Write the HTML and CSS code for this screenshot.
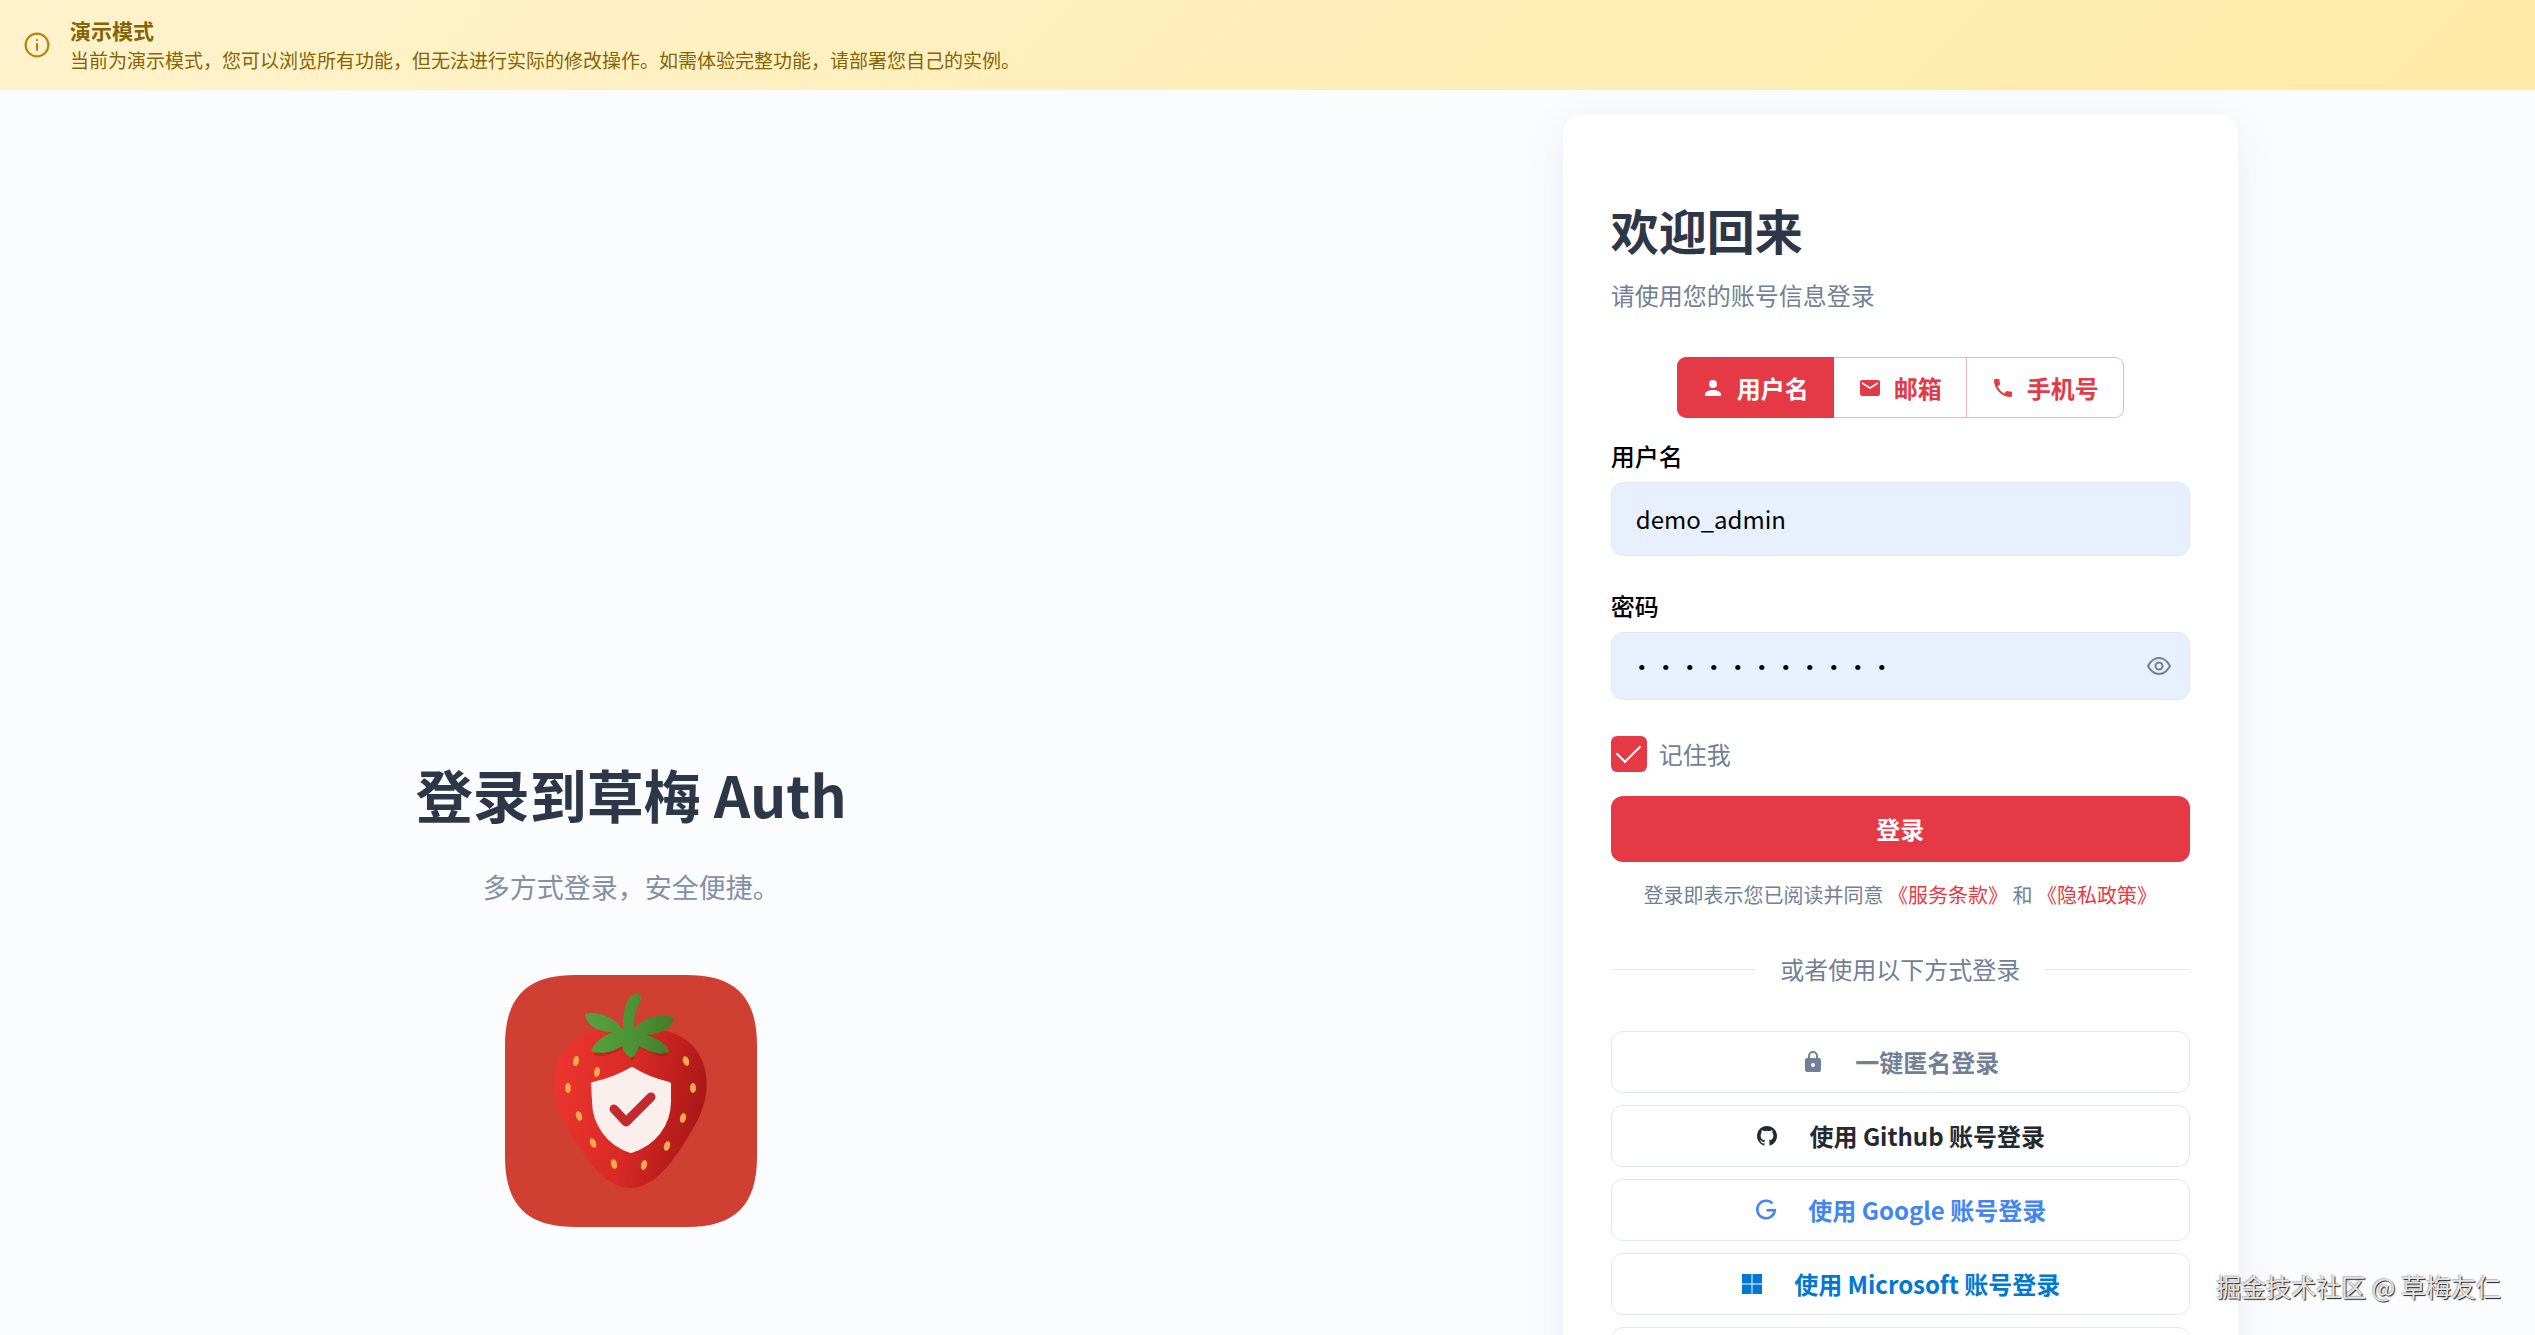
FILE: index.html
```html
<!DOCTYPE html>
<html lang="zh-CN">
<head>
<meta charset="utf-8">
<meta name="viewport" content="width=device-width, initial-scale=1">
<title>登录到草梅 Auth</title>
<link rel="stylesheet" href="styles.css">
</head>
<body>
<header class="banner">
  <svg class="banner-icon" viewBox="0 0 24 24" fill="none" stroke="currentColor" stroke-width="2" stroke-linecap="round"><circle cx="12" cy="12" r="10.500"/><path d="M12 11v5.500M12 7.500v.1"/></svg>
  <div>
    <strong class="banner-title">演示模式</strong>
    <p class="banner-text">当前为演示模式，您可以浏览所有功能，但无法进行实际的修改操作。如需体验完整功能，请部署您自己的实例。</p>
  </div>
</header>

<main class="page">
  <section class="hero">
    <h1 class="hero-title">登录到草梅 Auth</h1>
    <p class="hero-text">多方式登录，安全便捷。</p>
    <svg class="logo" viewBox="0 0 252 252" role="img" aria-label="草梅 Auth">
      <defs>
        <linearGradient id="berry" x1="0" y1="0.300" x2="1" y2="0.500">
          <stop offset="0" stop-color="#ec3530"/><stop offset="0.500" stop-color="#d92a26"/><stop offset="1" stop-color="#a81716"/>
        </linearGradient>
        <linearGradient id="leaf" x1="0" y1="0" x2="1" y2="0">
          <stop offset="0" stop-color="#57a33c"/><stop offset="0.600" stop-color="#4a9135"/><stop offset="1" stop-color="#467a28"/>
        </linearGradient>
      </defs>
      <path fill="#cf4032" d="M70 0H182C230 0 252 22 252 70V182C252 230 230 252 182 252H70C22 252 0 230 0 182V70C0 22 22 0 70 0Z"/>
      <path fill="url(#berry)" d="M126 58C150 50 178 56 192 76C208 100 202 130 190 150C175 176 154 213 125 213C97 213 76 176 61 150C49 130 43 100 58 76C72 55 100 50 126 58Z"/>
      <path fill="#8e1a17" opacity=".4" d="M88 80C101 83 112 78 119 72L127 86L135 72C143 78 155 83 164 80L152 68H98Z"/>
      <path fill="url(#leaf)" d="M118 55C118 43 119 28 126 21C130 17 138 19 136 25C130 34 129 43 129 54C138 43 153 38 168 42C170 52 155 60 140 60C151 62 163 69 164 77C153 81 143 76 134 71C133 76 130 81 126 83C121 80 118 76 117 71C108 77 97 80 86 76C89 68 98 60 109 57C93 58 81 49 80 39C95 36 110 43 118 55Z"/>
      <g fill="#f5a94b">
        <ellipse cx="71" cy="86" rx="3" ry="5" transform="rotate(12 71 86)"/><ellipse cx="92" cy="97" rx="3" ry="5" transform="rotate(10 92 97)"/><ellipse cx="63" cy="113" rx="3" ry="5"/><ellipse cx="74" cy="141" rx="3" ry="5" transform="rotate(-18 74 141)"/><ellipse cx="88" cy="168" rx="3" ry="5" transform="rotate(-22 88 168)"/><ellipse cx="109" cy="189" rx="3" ry="5" transform="rotate(-16 109 189)"/><ellipse cx="139" cy="190" rx="3" ry="5" transform="rotate(16 139 190)"/><ellipse cx="162" cy="171" rx="3" ry="5" transform="rotate(18 162 171)"/><ellipse cx="178" cy="143" rx="3" ry="5" transform="rotate(14 178 143)"/><ellipse cx="188" cy="113" rx="3" ry="5"/><ellipse cx="181" cy="86" rx="3" ry="5" transform="rotate(-18 181 86)"/>
      </g>
      <path fill="#faefed" stroke="#faefed" stroke-width="4" stroke-linejoin="round" d="M127 94C138 101 151 106 164 109V126C164 150 149 169 126 176C103 169 89 148 89 126L88 109C102 106 115 101 127 94Z"/>
      <path fill="none" stroke="#c4292d" stroke-width="9" stroke-linecap="round" stroke-linejoin="round" d="M109 134L121 147L146 122"/>
    </svg>
  </section>

  <section class="side">
    <div class="card">
      <h2 class="card-title">欢迎回来</h2>
      <p class="card-text">请使用您的账号信息登录</p>

      <div class="tabs">
        <button class="tab tab-active" type="button">
          <svg class="icon" viewBox="0 0 24 24" fill="currentColor"><path d="M12 12a4 4 0 1 0 0-8 4 4 0 0 0 0 8zm0 2c-2.670 0-8 1.340-8 4v2h16v-2c0-2.660-5.330-4-8-4z"/></svg>用户名</button>
        <button class="tab" type="button">
          <svg class="icon" viewBox="0 0 24 24" fill="currentColor"><path d="M20 4H4a2 2 0 0 0-2 2v12c0 1.100.9 2 2 2h16a2 2 0 0 0 2-2V6a2 2 0 0 0-2-2zm0 4-8 5-8-5V6l8 5 8-5v2z"/></svg>邮箱</button>
        <button class="tab" type="button">
          <svg class="icon" viewBox="0 0 24 24" fill="currentColor"><path d="M6.620 10.790a15.050 15.050 0 0 0 6.590 6.590l2.200-2.200a1 1 0 0 1 1.020-.24c1.120.37 2.330.57 3.570.57.550 0 1 .45 1 1V20a1 1 0 0 1-1 1C10.610 21 3 13.390 3 4a1 1 0 0 1 1-1h3.500c.55 0 1 .45 1 1 0 1.250.2 2.450.57 3.570.11.350.03.740-.25 1.020l-2.200 2.200z"/></svg>手机号</button>
      </div>

      <form class="form">
        <label class="label" for="username">用户名</label>
        <input class="input input-user" id="username" type="text" value="demo_admin">
        <label class="label" for="password">密码</label>
        <div class="password">
          <input class="input input-pass" id="password" type="password" value="demo1234567">
          <button class="eye" type="button" aria-label="显示密码">
            <svg class="icon" viewBox="0 0 24 24" fill="none" stroke="currentColor" stroke-width="2"><path d="M1 12C4 6.500 7.500 4 12 4s8 2.500 11 8c-3 5.500-6.500 8-11 8s-8-2.500-11-8z"/><circle cx="12" cy="12" r="3.500"/></svg>
          </button>
        </div>
        <div class="remember">
          <input class="check" id="remember" type="checkbox" checked>
          <label for="remember">记住我</label>
        </div>
        <button class="submit" type="button">登录</button>
      </form>

      <p class="terms">登录即表示您已阅读并同意 <a href="#terms">《服务条款》</a> 和 <a href="#privacy">《隐私政策》</a></p>
      <div class="divider">或者使用以下方式登录</div>

      <div class="socials">
        <button class="social anonymous" type="button">
          <svg class="icon" viewBox="0 0 24 24" fill="currentColor"><path d="M18 8h-1V6A5 5 0 0 0 7 6v2H6a2 2 0 0 0-2 2v10c0 1.100.9 2 2 2h12a2 2 0 0 0 2-2V10a2 2 0 0 0-2-2zm-6 9a2 2 0 1 1 0-4 2 2 0 0 1 0 4zM9 8V6a3 3 0 0 1 6 0v2z"/></svg>一键匿名登录</button>
        <button class="social github" type="button">
          <svg class="icon" viewBox="0 0 24 24" fill="currentColor"><path d="M12 2A10 10 0 0 0 8.840 21.500c.5.080.66-.23.660-.5v-1.690c-2.770.6-3.360-1.340-3.360-1.340-.46-1.160-1.110-1.470-1.110-1.470-.91-.62.070-.6.070-.6 1 .07 1.530 1.030 1.530 1.030.87 1.520 2.340 1.070 2.910.83.090-.65.350-1.090.63-1.340-2.220-.25-4.550-1.110-4.550-4.920 0-1.110.38-2 1.030-2.710-.1-.25-.45-1.290.1-2.640 0 0 .84-.27 2.750 1.020a9.600 9.600 0 0 1 5 0c1.910-1.290 2.750-1.020 2.750-1.020.55 1.350.2 2.390.1 2.640.65.710 1.030 1.600 1.030 2.710 0 3.820-2.340 4.660-4.570 4.910.36.310.69.920.69 1.850V21c0 .27.16.590.67.5A10 10 0 0 0 12 2z"/></svg>使用 Github 账号登录</button>
        <button class="social google" type="button">
          <svg class="icon" viewBox="0 0 24 24" fill="none" stroke="currentColor" stroke-width="2.500"><path d="M18.500 5.500A8.800 8.800 0 1 0 20.800 12.300H12.500"/></svg>使用 Google 账号登录</button>
        <button class="social microsoft" type="button">
          <svg class="icon" viewBox="0 0 24 24" fill="currentColor"><path d="M2 2h9.500v9.500H2zM12.500 2H22v9.500h-9.500zM2 12.500h9.500V22H2zM12.500 12.500H22V22h-9.500z"/></svg>使用 Microsoft 账号登录</button>
        <button class="social" type="button" aria-label="更多登录方式"></button>
      </div>
    </div>
  </section>
</main>
<div class="watermark">掘金技术社区 @ 草梅友仁</div>
</body>
</html>
```
FILE: styles.css
```css
* { box-sizing: border-box; }

body {
  margin: 0;
  height: 100vh;
  overflow: hidden;
  display: flex;
  flex-direction: column;
  background: #fafcfe;
  color: #2d3748;
  font: 24px/36px "Noto Sans CJK SC", sans-serif;
}

h1, h2, p { margin: 0; }
button, input { font: inherit; color: inherit; }
button { cursor: pointer; }
a { color: #e63946; text-decoration: none; }
.icon { width: 24px; height: 24px; flex: none; }

.banner {
  display: flex;
  align-items: center;
  gap: 20px;
  flex: none;
  padding: 16px 24px;
  background: linear-gradient(135deg, #fff3cd, #ffeaa7);
  color: #856404;
}
.banner-icon { width: 26px; height: 26px; color: #b8860b; }
.banner-title { display: block; font-size: 21px; line-height: 29px; }
.banner-text { font-size: 19px; line-height: 29px; }

.page {
  flex: 1;
  min-height: 0;
  display: grid;
  grid-template-columns: 1fr 1fr;
  grid-template-rows: minmax(0, 1fr);
}

.hero {
  display: flex;
  flex-direction: column;
  align-items: center;
  justify-content: flex-end;
  padding: 0 5px 108px 0;
  text-align: center;
}
.hero-title { font-size: 57px; line-height: 68px; }
.hero-text { margin: 40px 0 68px; font-size: 27px; line-height: 40px; color: #8490a5; }
.logo { width: 252px; height: 252px; }

.side { display: flex; justify-content: center; align-items: flex-start; padding: 24px 2px 0 0; }
.card {
  width: 100%;
  max-width: 675px;
  padding: 79px 48px 48px;
  border-radius: 20px;
  background: #fff;
  box-shadow: 0 12px 48px rgba(45, 55, 72, 0.08);
}
.card-title { font-size: 48px; line-height: 72px; }
.card-text { margin-top: 12px; color: #718096; }

.tabs { display: flex; justify-content: center; margin: 44px 0 20px; }
.tab {
  display: flex;
  align-items: center;
  gap: 12px;
  height: 61px;
  padding: 0 24px;
  border: 1px solid #f3b4c4;
  border-left-width: 0;
  background: #fff;
  color: #e63946;
  font-weight: 700;
}
.tab:first-child { border-radius: 9px 0 0 9px; }
.tab:last-child { border-radius: 0 9px 9px 0; }
.tab-active { border-color: #e63946; background: #e63946; color: #fff; }

.form { display: flex; flex-direction: column; }
.label { margin-bottom: 8px; color: #000; font-weight: 500; }
.input {
  width: 100%;
  padding: 0 24px 2px;
  border: 1px solid #e2e8f0;
  border-radius: 12px;
  background: #e8f0fe;
  color: #000;
  outline: 0;
}
.input-user { height: 74px; margin-bottom: 32px; }
.input-pass { height: 68px; padding-left: 18px; }
.password { display: flex; position: relative; }
.eye {
  position: absolute;
  top: 22px;
  right: 19px;
  display: flex;
  padding: 0;
  border: 0;
  background: none;
  color: #718096;
}
.remember { display: flex; align-items: center; gap: 12px; margin: 36px 0 24px; color: #718096; }
.check {
  appearance: none;
  width: 36px;
  height: 36px;
  margin: 0;
  border-radius: 6px;
  background: #e63946;
  display: grid;
  place-items: center;
}
.check::after {
  content: "";
  width: 11px;
  height: 21px;
  margin-bottom: 7px;
  border: solid #fff;
  border-width: 0 2px 2px 0;
  rotate: 45deg;
}
.submit {
  height: 66px;
  border: 0;
  border-radius: 12px;
  background: #e63946;
  color: #fff;
  font-weight: 700;
}

.terms { margin-top: 15px; text-align: center; font-size: 20px; color: #718096; }
.divider { display: flex; align-items: center; gap: 25px; margin: 38px 0 44px; color: #718096; }
.divider::before, .divider::after { content: ""; flex: 1; height: 1px; background: #e2e8f0; }

.socials { display: flex; flex-direction: column; gap: 12px; }
.social {
  display: flex;
  align-items: center;
  justify-content: center;
  gap: 30px;
  height: 62px;
  border: 1px solid #e2e8f0;
  border-radius: 12px;
  background: #fff;
  font-weight: 700;
}
.anonymous { color: #718096; }
.github { color: #24292e; }
.google { color: #4285f4; }
.microsoft { color: #0078d4; }

.watermark {
  position: absolute;
  right: 34px;
  bottom: 31px;
  font-size: 25px;
  color: #e4e4e4;
  text-shadow: 1px 1px 1px #222, -1px -1px 1px #bbb;
}
```
